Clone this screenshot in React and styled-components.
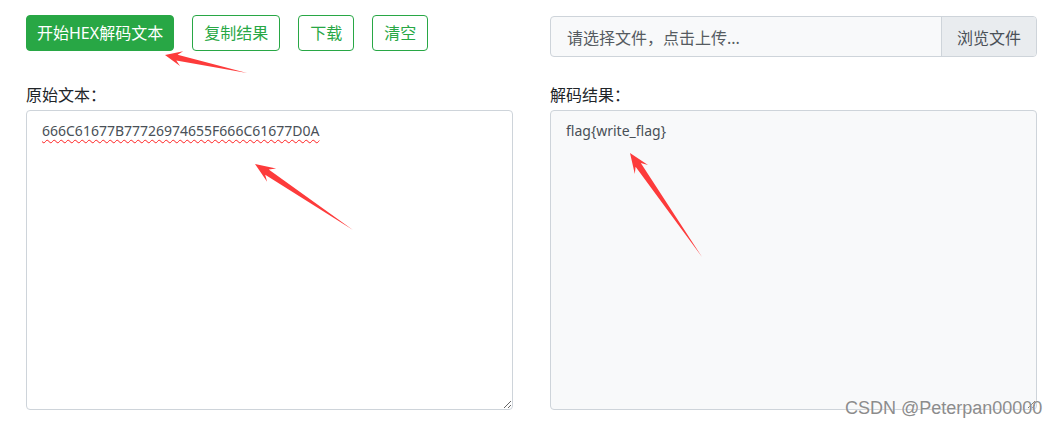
import React from "react";
import styled, { createGlobalStyle } from "styled-components";

const GlobalStyle = createGlobalStyle`
  html, body {
    margin: 0;
    padding: 0;
    background: #fff;
    overflow: hidden;
  }
  body {
    font-family: "Noto Sans", "Noto Sans CJK SC", sans-serif;
    color: #212529;
  }
`;

// arrow drawn as a tapered shaft ending in a barbed head
const arrowPoints = ([tx, ty], [ex, ey], head = 19, wing = 8, neck = 3) => {
  const len = Math.hypot(tx - ex, ty - ey);
  const ux = (tx - ex) / len;
  const uy = (ty - ey) / len;
  const nx = -uy;
  const ny = ux;
  const bx = tx - ux * head;
  const by = ty - uy * head;
  const cx = tx - ux * head * 0.72;
  const cy = ty - uy * head * 0.72;
  const pts = [
    [tx, ty],
    [bx + nx * wing, by + ny * wing],
    [cx + nx * neck, cy + ny * neck],
    [ex, ey],
    [cx - nx * neck, cy - ny * neck],
    [bx - nx * wing, by - ny * wing],
  ];
  return pts.map((p) => p.map((v) => v.toFixed(1)).join(",")).join(" ");
};

const arrows = [
  { tip: [165, 55], tail: [247, 73], head: 17, wing: 7.5, neck: 3 },
  { tip: [255, 164], tail: [353, 230], head: 20, wing: 8, neck: 3.2 },
  { tip: [630, 153], tail: [702, 257], head: 20, wing: 8, neck: 3.2 },
];

const App = () => {
  return (
    <Page>
      <GlobalStyle />
      <Grid>
        <Toolbar>
          <Button $solid>开始HEX解码文本</Button>
          <Button>复制结果</Button>
          <Button>下载</Button>
          <Button>清空</Button>
        </Toolbar>

        <FileBox>
          <FilePlaceholder>请选择文件，点击上传...</FilePlaceholder>
          <BrowseButton>浏览文件</BrowseButton>
        </FileBox>

        <Field>
          <Label>原始文本：</Label>
          <TextArea
            $misspelled
            spellCheck={false}
            defaultValue="666C61677B77726974655F666C61677D0A"
          />
        </Field>

        <Field>
          <Label>解码结果：</Label>
          <TextArea $readonly readOnly defaultValue="flag{write_flag}" />
        </Field>
      </Grid>

      <Annotations width="1059" height="428" viewBox="0 0 1059 428">
        {arrows.map((a, i) => (
          <polygon
            key={i}
            points={arrowPoints(a.tip, a.tail, a.head, a.wing, a.neck)}
            fill="#fd3b3b"
          />
        ))}
      </Annotations>

      <Watermark>CSDN @Peterpan00000</Watermark>
    </Page>
  );
};

const Page = styled.div`
  position: relative;
  width: 1059px;
  height: 428px;
  box-sizing: border-box;
  padding: 15px 22px 0 26px;
`;

const Grid = styled.div`
  display: grid;
  grid-template-columns: 487px 487px;
  grid-template-rows: 42px auto;
  column-gap: 37px;
  row-gap: 26px;
`;

const Toolbar = styled.div`
  display: flex;
  align-items: flex-start;
  gap: 18px;
`;

const Button = styled.button`
  height: 36px;
  padding: 0 ${(p) => (p.$solid ? "10px" : "11px")};
  border: 1px solid #28a745;
  border-radius: 4px;
  background: ${(p) => (p.$solid ? "#28a745" : "#fff")};
  color: ${(p) => (p.$solid ? "#fff" : "#28a745")};
  font-family: "Noto Sans", "Noto Sans CJK SC", sans-serif;
  font-size: 16px;
  line-height: 24px;
  cursor: pointer;
  white-space: nowrap;
`;

const FileBox = styled.div`
  display: flex;
  height: 41px;
  margin-top: 1px;
  box-sizing: border-box;
  border: 1px solid #ced4da;
  border-radius: 4px;
  background: #f8f9fa;
  overflow: hidden;
`;

const FilePlaceholder = styled.div`
  flex: 1;
  display: flex;
  align-items: center;
  padding-left: 16px;
  font-size: 16px;
  color: #555b61;
`;

const BrowseButton = styled.div`
  display: flex;
  align-items: center;
  padding: 0 15px;
  border-left: 1px solid #ced4da;
  background: #e9ecef;
  font-size: 16px;
  color: #495057;
`;

const Field = styled.div`
  display: flex;
  flex-direction: column;
`;

const Label = styled.label`
  font-size: 16px;
  line-height: 24px;
  margin-bottom: 3px;
  color: #212529;
`;

const TextArea = styled.textarea`
  height: 300px;
  box-sizing: border-box;
  padding: 9px 15px;
  border: 1px solid #ced4da;
  border-radius: 4px;
  background: ${(p) => (p.$readonly ? "#f8f9fa" : "#fff")};
  color: #495057;
  font-family: "Noto Sans", "Noto Sans CJK SC", sans-serif;
  font-size: 14px;
  line-height: 21px;
  resize: vertical;
  outline: none;
  text-decoration: ${(p) => (p.$misspelled ? "underline wavy #ff2020" : "none")};
  text-decoration-thickness: 1px;
  text-underline-offset: 3px;
`;

const Annotations = styled.svg`
  position: absolute;
  left: 0;
  top: 0;
  pointer-events: none;
`;

const Watermark = styled.div`
  position: absolute;
  left: 845px;
  top: 398px;
  font-family: "Liberation Sans", Arial, sans-serif;
  font-size: 18px;
  color: #8c8c8c;
  text-shadow: 0 0 2px #fff;
  white-space: nowrap;
  pointer-events: none;
`;

export default App;
